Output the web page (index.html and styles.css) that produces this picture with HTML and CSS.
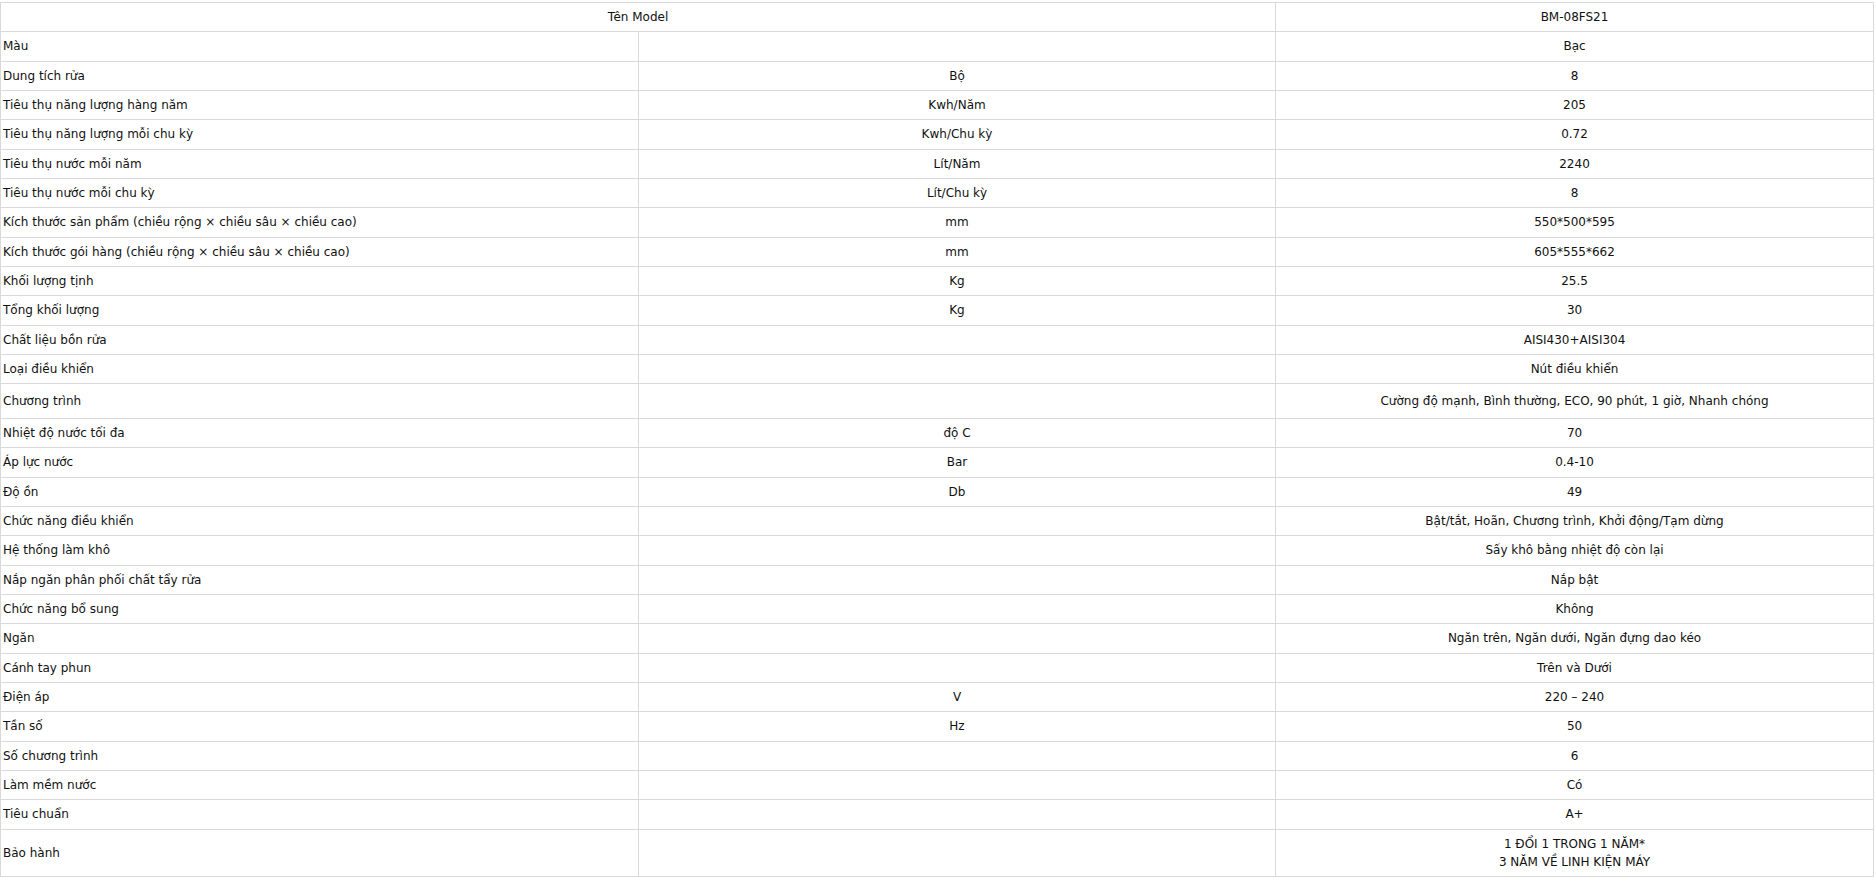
FILE: index.html
```html
<!DOCTYPE html>
<html lang="vi">
<head>
    <meta charset="UTF-8">
    <meta name="viewport" content="width=device-width, initial-scale=1.0">
    <title>BM-08FS21 - Thông số kỹ thuật</title>
    <link rel="stylesheet" href="styles.css">
</head>
<body>
    <table class="spec-table">
        <colgroup>
            <col class="col-name">
            <col class="col-unit">
            <col class="col-value">
        </colgroup>
        <tr>
            <td colspan="2" class="center">Tên Model</td>
            <td class="center">BM-08FS21</td>
        </tr>
        <tr><td>Màu</td><td></td><td class="center">Bạc</td></tr>
        <tr><td>Dung tích rửa</td><td class="center">Bộ</td><td class="center">8</td></tr>
        <tr><td>Tiêu thụ năng lượng hàng năm</td><td class="center">Kwh/Năm</td><td class="center">205</td></tr>
        <tr><td>Tiêu thụ năng lượng mỗi chu kỳ</td><td class="center">Kwh/Chu kỳ</td><td class="center">0.72</td></tr>
        <tr><td>Tiêu thụ nước mỗi năm</td><td class="center">Lít/Năm</td><td class="center">2240</td></tr>
        <tr><td>Tiêu thụ nước mỗi chu kỳ</td><td class="center">Lít/Chu kỳ</td><td class="center">8</td></tr>
        <tr><td>Kích thước sản phẩm (chiều rộng × chiều sâu × chiều cao)</td><td class="center">mm</td><td class="center">550*500*595</td></tr>
        <tr><td>Kích thước gói hàng (chiều rộng × chiều sâu × chiều cao)</td><td class="center">mm</td><td class="center">605*555*662</td></tr>
        <tr><td>Khối lượng tịnh</td><td class="center">Kg</td><td class="center">25.5</td></tr>
        <tr><td>Tổng khối lượng</td><td class="center">Kg</td><td class="center">30</td></tr>
        <tr><td>Chất liệu bồn rửa</td><td></td><td class="center">AISI430+AISI304</td></tr>
        <tr><td>Loại điều khiển</td><td></td><td class="center">Nút điều khiển</td></tr>
        <tr class="tall"><td>Chương trình</td><td></td><td class="center">Cường độ mạnh, Bình thường, ECO, 90 phút, 1 giờ, Nhanh chóng</td></tr>
        <tr><td>Nhiệt độ nước tối đa</td><td class="center">độ C</td><td class="center">70</td></tr>
        <tr><td>Áp lực nước</td><td class="center">Bar</td><td class="center">0.4-10</td></tr>
        <tr><td>Độ ồn</td><td class="center">Db</td><td class="center">49</td></tr>
        <tr><td>Chức năng điều khiển</td><td></td><td class="center">Bật/tắt, Hoãn, Chương trình, Khởi động/Tạm dừng</td></tr>
        <tr><td>Hệ thống làm khô</td><td></td><td class="center">Sấy khô bằng nhiệt độ còn lại</td></tr>
        <tr><td>Nắp ngăn phân phối chất tẩy rửa</td><td></td><td class="center">Nắp bật</td></tr>
        <tr><td>Chức năng bổ sung</td><td></td><td class="center">Không</td></tr>
        <tr><td>Ngăn</td><td></td><td class="center">Ngăn trên, Ngăn dưới, Ngăn đựng dao kéo</td></tr>
        <tr><td>Cánh tay phun</td><td></td><td class="center">Trên và Dưới</td></tr>
        <tr><td>Điện áp</td><td class="center">V</td><td class="center">220 – 240</td></tr>
        <tr><td>Tần số</td><td class="center">Hz</td><td class="center">50</td></tr>
        <tr><td>Số chương trình</td><td></td><td class="center">6</td></tr>
        <tr><td>Làm mềm nước</td><td></td><td class="center">Có</td></tr>
        <tr><td>Tiêu chuẩn</td><td></td><td class="center">A+</td></tr>
        <tr class="warranty"><td>Bảo hành</td><td></td><td class="center">1 ĐỔI 1 TRONG 1 NĂM*<br>3 NĂM VỀ LINH KIỆN MÁY</td></tr>
    </table>
</body>
</html>
```

FILE: styles.css
```css
body {
    margin: 0;
    padding: 2px 0 0;
    background-color: #ffffff;
    font-family: "DejaVu Sans", Arial, sans-serif;
    font-size: 12px;
    color: #111111;
}

.spec-table {
    width: 1873px;
    border-collapse: collapse;
    table-layout: fixed;
}

.col-name {
    width: 638px;
}

.col-unit {
    width: 637px;
}

.col-value {
    width: 598px;
}

.spec-table td {
    border: 1px solid #d9d9d9;
    padding: 5px 2px;
    line-height: 18.35px;
    text-align: left;
    vertical-align: middle;
}

.spec-table td.center {
    text-align: center;
}

.spec-table tr.tall td {
    padding-top: 7.5px;
    padding-bottom: 7.5px;
}

.spec-table tr.warranty td {
    padding-top: 5px;
    padding-bottom: 5px;
    line-height: 18px;
}
```
